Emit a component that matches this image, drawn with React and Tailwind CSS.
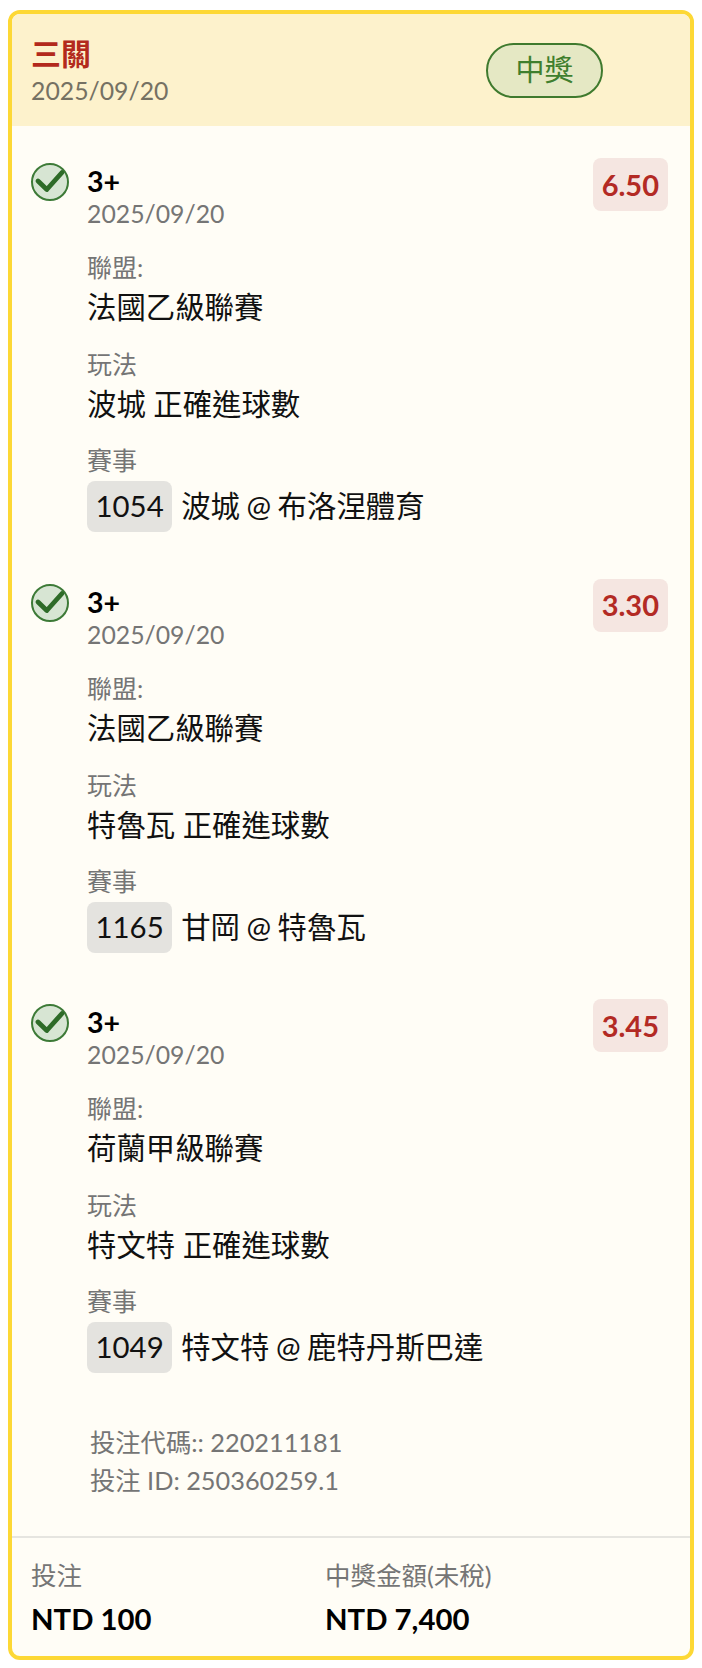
const F = '"Lato","Noto Sans CJK TC",sans-serif';

function Check() {
  return (
    <svg width="40" height="40" viewBox="0 0 40 40" className="shrink-0">
      <circle cx="20" cy="20" r="18" fill="#d7e5d3" stroke="#3d7a37" strokeWidth="2" />
      <path d="M8 19 L16.8 27.5 L32 10.5" fill="none" stroke="#2e6b28" strokeWidth="4.8" strokeLinecap="round" strokeLinejoin="round" />
    </svg>
  );
}

function Field({ label, children, first }) {
  return (
    <div className={first ? "mt-[20px]" : "mt-[17px]"}>
      <div className="text-[25px] leading-[36px] text-[#757575]">{label}</div>
      <div className="text-[29.4px] leading-[44px] text-[#111111]">{children}</div>
    </div>
  );
}

function Item({ odds, league, play, no, match }) {
  return (
    <div className="flex items-start gap-[17px] mb-[46.5px]">
      <div className="pt-[4px]"><Check /></div>
      <div className="flex-1">
        <div className="flex items-start justify-between">
          <div className="pt-[5px]">
            <div className="text-[28.5px] leading-[36px] font-bold text-black">3+</div>
            <div className="text-[24.8px] leading-[30px] text-[#757575]">2025/09/20</div>
          </div>
          <div className="rounded-[8px] bg-[#f5e6e1] px-[9px] h-[53px] flex items-center text-[29px] font-bold text-[#b32a24]">{odds}</div>
        </div>
        <Field first label="聯盟:">{league}</Field>
        <Field label="玩法">{play}</Field>
        <div className="mt-[16px]">
          <div className="text-[25px] leading-[36px] text-[#757575]">賽事</div>
          <div className="mt-[3px] flex items-center gap-[9px] text-[29.4px] text-[#111111]">
            <span className="rounded-[8px] bg-[#e4e3df] px-[8.5px] h-[51px] flex items-center">{no}</span>
            <span className="[word-spacing:-1px]">{match}</span>
          </div>
        </div>
      </div>
    </div>
  );
}

export default function App() {
  return (
    <div className="w-[702px] h-[1668px] bg-white pt-[10px] px-[8px]" style={{ fontFamily: F }}>
      <div className="h-[1650px] border-[4px] border-[#fdd835] rounded-[12px] bg-[#fffdf6] flex flex-col overflow-hidden">
        <div className="h-[112px] bg-[#fdf2cc] flex items-center justify-between pl-[19px] pr-[87px] shrink-0">
          <div className="pt-[4px]">
            <div className="text-[30px] leading-[37px] font-bold text-[#b32a1c]">三關</div>
            <div className="text-[24.8px] leading-[37px] text-[#757163]">2025/09/20</div>
          </div>
          <div className="w-[117px] h-[55px] rounded-full border-[2px] border-[#3f7a2e] bg-[#e5e8c4] text-[#3f7f2e] text-[29px] flex items-center justify-center">中獎</div>
        </div>
        <div className="flex-1 pt-[32px] pl-[18px] pr-[22px]">
          <Item odds="6.50" league="法國乙級聯賽" play="波城 正確進球數" no="1054" match="波城 @ 布洛涅體育" />
          <Item odds="3.30" league="法國乙級聯賽" play="特魯瓦 正確進球數" no="1165" match="甘岡 @ 特魯瓦" />
          <Item odds="3.45" league="荷蘭甲級聯賽" play="特文特 正確進球數" no="1049" match="特文特 @ 鹿特丹斯巴達" />
          <div className="pt-[3px] pl-[60px] text-[25.3px] leading-[38px] text-[#757575]">
            <div>投注代碼:: 220211181</div>
            <div>投注 ID: 250360259.1</div>
          </div>
        </div>
        <div className="h-[120px] shrink-0 border-t-[2px] border-[#e6e5e0] pl-[19px] pt-[18px] flex">
          <div className="w-[294px]">
            <div className="text-[25.5px] leading-[38px] text-[#757575]">投注</div>
            <div className="mt-[2px] text-[29.3px] leading-[46px] font-bold text-black">NTD 100</div>
          </div>
          <div>
            <div className="text-[25.5px] leading-[38px] text-[#757575]">中獎金額(未稅)</div>
            <div className="mt-[2px] text-[29.3px] leading-[46px] font-bold text-black">NTD 7,400</div>
          </div>
        </div>
      </div>
    </div>
  );
}
